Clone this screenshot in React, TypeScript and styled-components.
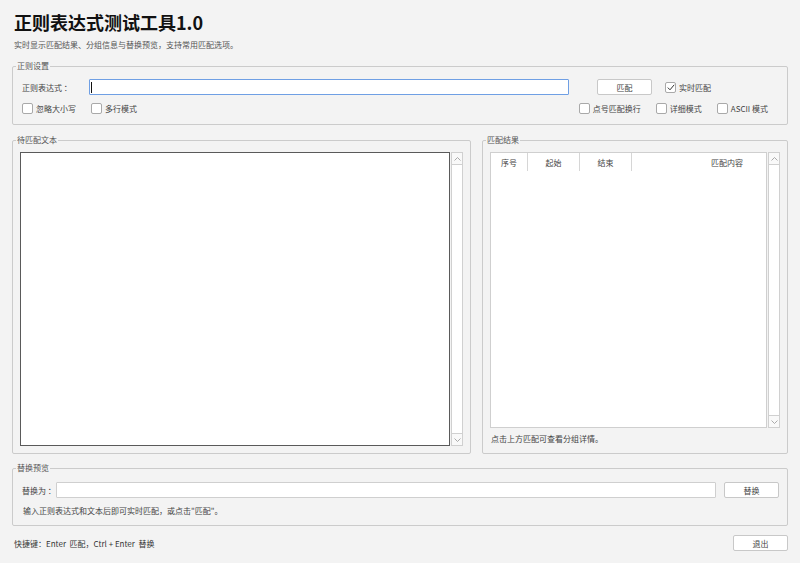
import React from "react";
import styled, { createGlobalStyle } from "styled-components";

const Global = createGlobalStyle`
  html, body { margin: 0; padding: 0; background: #f3f3f3; }
  body { font-family: "Noto Sans CJK SC", "Noto Sans", sans-serif; color: #333; }
  * { box-sizing: border-box; }
`;

const Root = styled.div`
  width: 800px;
  height: 563px;
  padding: 10px 12px 0 12px;
  display: flex;
  flex-direction: column;
  background: #f3f3f3;
  font-size: 8px;
`;

const Title = styled.div`
  margin-left: 2px;
  font-size: 18px;
  line-height: 24px;
  font-weight: 700;
  color: #111;
`;

const Subtitle = styled.div`
  margin: 5px 0 0 2px;
  font-size: 8px;
  line-height: 12px;
  color: #555;
`;

const Group = styled.div<{ $mt: number; $pad: string; $w?: number }>`
  position: relative;
  margin-top: ${(p) => p.$mt}px;
  border: 1px solid #cbcbcb;
  border-radius: 2px;
  padding: ${(p) => p.$pad};
  ${(p) => (p.$w ? `width: ${p.$w}px; flex: none;` : "")}
  display: flex;
  flex-direction: column;
`;

const Legend = styled.span`
  position: absolute;
  top: -7px;
  left: 3px;
  padding: 0 1px;
  background: #f3f3f3;
  font-size: 8px;
  line-height: 12px;
  color: #555;
`;

const Row = styled.div<{ $h: number; $mt?: number }>`
  display: flex;
  align-items: center;
  height: ${(p) => p.$h}px;
  margin-top: ${(p) => p.$mt ?? 0}px;
`;

const Label = styled.span<{ $w: number }>`
  width: ${(p) => p.$w}px;
  flex: none;
  font-size: 8px;
  color: #444;
  white-space: pre;
`;

const Field = styled.div<{ $focus?: boolean; $w?: number }>`
  height: 16px;
  ${(p) => (p.$w ? `width: ${p.$w}px; flex: none;` : "flex: 1;")}
  background: #fff;
  border: 1px solid ${(p) => (p.$focus ? "#6f9fe4" : "#cfcfcf")};
  border-radius: 1px;
  display: flex;
  align-items: center;
  padding-left: 1px;
`;

const Caret = styled.span`
  width: 1px;
  height: 11px;
  background: #111;
`;

const Button = styled.div<{ $ml?: number }>`
  width: 55px;
  height: 16px;
  flex: none;
  margin-left: ${(p) => p.$ml ?? 0}px;
  background: #fff;
  border: 1px solid #c8c8c8;
  border-radius: 2px;
  display: flex;
  align-items: center;
  justify-content: center;
  font-size: 8px;
  color: #444;
`;

const CheckWrap = styled.label<{ $ml?: number }>`
  display: flex;
  align-items: center;
  gap: 3px;
  margin-left: ${(p) => p.$ml ?? 0}px;
  font-size: 8px;
  color: #444;
  white-space: nowrap;
`;

const Box = styled.span`
  width: 11px;
  height: 11px;
  border: 1px solid #a9a9a9;
  border-radius: 2px;
  background: #fff;
  display: flex;
  align-items: center;
  justify-content: center;
`;

const Spread = styled.div`
  display: flex;
  align-items: center;
  justify-content: space-between;
  height: 14px;
  margin-top: 6px;
  padding-right: 19px;
`;

const Cluster = styled.div`
  display: flex;
  align-items: center;
`;

const Columns = styled.div`
  display: flex;
  gap: 11px;
  margin-top: 15px;
  height: 314px;
`;

const Pane = styled.div`
  flex: 1;
  display: flex;
  min-height: 0;
`;

const TextArea = styled.div`
  flex: 1;
  background: #fff;
  border: 1px solid #5a5a5a;
`;

const ScrollBar = styled.div`
  width: 12px;
  flex: none;
  margin-left: 1px;
  display: flex;
  flex-direction: column;
  background: #fff;
`;

const ScrollBtn = styled.div`
  height: 13px;
  border: 1px solid #d0d0d0;
  background: #f9f9f9;
  display: flex;
  align-items: center;
  justify-content: center;
`;

const Track = styled.div`
  flex: 1;
  border-left: 1px solid #d0d0d0;
  border-right: 1px solid #d0d0d0;
  background: #fff;
`;

const Table = styled.div`
  flex: 1;
  background: #fff;
  border: 1px solid #cfcfcf;
  display: flex;
  flex-direction: column;
`;

const Header = styled.div`
  display: flex;
  height: 18px;
`;

const HeadCell = styled.div<{ $w?: number; $end?: boolean }>`
  ${(p) => (p.$w ? `width: ${p.$w}px; flex: none;` : "flex: 1;")}
  display: flex;
  align-items: center;
  justify-content: ${(p) => (p.$end ? "flex-end" : "center")};
  padding-right: ${(p) => (p.$end ? 23 : 0)}px;
  border-right: ${(p) => (p.$end ? "none" : "1px solid #d6d6d6")};
  font-size: 8px;
  color: #444;
`;

const Note = styled.div<{ $mt: number }>`
  margin-top: ${(p) => p.$mt}px;
  line-height: 12px;
  font-size: 8px;
  color: #444;
  padding-left: 1px;
`;

const Footer = styled.div`
  display: flex;
  align-items: center;
  justify-content: space-between;
  margin-top: 9px;
  height: 16px;
`;

const FootText = styled.span`
  padding-left: 2px;
  font-size: 8px;
  color: #333;
  white-space: pre;
`;

const Chevron = ({ up }: { up?: boolean }) => (
  <svg width="7" height="4" viewBox="0 0 7 4">
    <polyline
      points={up ? "0.5,3.5 3.5,0.5 6.5,3.5" : "0.5,0.5 3.5,3.5 6.5,0.5"}
      fill="none"
      stroke="#a0a0a0"
      strokeWidth="0.9"
    />
  </svg>
);

const Check = ({ label, checked, ml }: { label: string; checked?: boolean; ml?: number }) => (
  <CheckWrap $ml={ml}>
    <Box>
      {checked && (
        <svg width="8" height="7" viewBox="0 0 8 7">
          <polyline points="0.8,3.6 3,5.8 7.2,0.8" fill="none" stroke="#333" strokeWidth="1" />
        </svg>
      )}
    </Box>
    {label}
  </CheckWrap>
);

const Scroll = () => (
  <ScrollBar>
    <ScrollBtn>
      <Chevron up />
    </ScrollBtn>
    <Track />
    <ScrollBtn>
      <Chevron />
    </ScrollBtn>
  </ScrollBar>
);

export default function App() {
  return (
    <>
      <Global />
      <Root>
        <Title>正则表达式测试工具1.0</Title>
        <Subtitle>实时显示匹配结果、分组信息与替换预览，支持常用匹配选项。</Subtitle>

        <Group $mt={15} $pad="12px 0 9px 9px">
          <Legend>正则设置</Legend>
          <Row $h={16}>
            <Label $w={67}>正则表达式 ：</Label>
            <Field $focus $w={480}>
              <Caret />
            </Field>
            <Button $ml={28}>匹配</Button>
            <Check label="实时匹配" checked ml={13} />
          </Row>
          <Spread>
            <Cluster>
              <Check label="忽略大小写" />
              <Check label="多行模式" ml={15} />
            </Cluster>
            <Cluster>
              <Check label="点号匹配换行" />
              <Check label="详细模式" ml={15} />
              <Check label="ASCII 模式" ml={15} />
            </Cluster>
          </Spread>
        </Group>

        <Columns>
          <Group $mt={0} $pad="11px 7px 7px 7px" $w={459}>
            <Legend>待匹配文本</Legend>
            <Pane>
              <TextArea />
              <Scroll />
            </Pane>
          </Group>
          <Group $mt={0} $pad="11px 7px 8px 7px" $w={306}>
            <Legend>匹配结果</Legend>
            <Pane>
              <Table>
                <Header>
                  <HeadCell $w={37}>序号</HeadCell>
                  <HeadCell $w={52}>起始</HeadCell>
                  <HeadCell $w={52}>结束</HeadCell>
                  <HeadCell $end>匹配内容</HeadCell>
                </Header>
              </Table>
              <Scroll />
            </Pane>
            <Note $mt={5}>点击上方匹配可查看分组详情。</Note>
          </Group>
        </Columns>

        <Group $mt={14} $pad="13px 8px 8px 9px">
          <Legend>替换预览</Legend>
          <Row $h={16}>
            <Label $w={34}>替换为 ：</Label>
            <Field />
            <Button $ml={8}>替换</Button>
          </Row>
          <Note $mt={7}>输入正则表达式和文本后即可实时匹配，或点击"匹配"。</Note>
        </Group>

        <Footer>
          <FootText>快捷键：Enter  匹配，Ctrl + Enter  替换</FootText>
          <Button>退出</Button>
        </Footer>
      </Root>
    </>
  );
}
